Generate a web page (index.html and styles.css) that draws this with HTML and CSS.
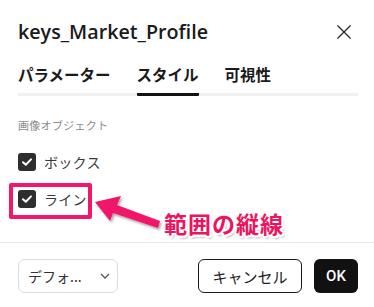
FILE: index.html
```html
<!DOCTYPE html>
<html lang="ja">
<head>
<meta charset="utf-8">
<link rel="stylesheet" href="styles.css">
</head>
<body>
<div class="dialog">
  <div class="header">
    <div class="title">keys_Market_Profile</div>
    <svg class="close" width="16" height="16" viewBox="0 0 16 16"><path d="M1.5 1.5L14.5 14.5M14.5 1.5L1.5 14.5" stroke="#2a2a2a" stroke-width="1.4" fill="none"/></svg>
  </div>
  <div class="tabs">
    <div class="tab">パラメーター</div>
    <div class="tab active">スタイル</div>
    <div class="tab">可視性</div>
  </div>
  <div class="content">
    <div class="section">画像オブジェクト</div>
    <div class="row">
      <span class="cb"><svg width="18" height="18" viewBox="0 0 18 18"><path d="M5 9.2L7.8 11.8L13 6.4" stroke="#fff" stroke-width="2" fill="none" stroke-linecap="round" stroke-linejoin="round"/></svg></span>
      <span class="label">ボックス</span>
    </div>
    <div class="row">
      <span class="cb"><svg width="18" height="18" viewBox="0 0 18 18"><path d="M5 9.2L7.8 11.8L13 6.4" stroke="#fff" stroke-width="2" fill="none" stroke-linecap="round" stroke-linejoin="round"/></svg></span>
      <span class="label">ライン</span>
    </div>
  </div>
  <div class="footer">
    <div class="select"><span>デフォ...</span><svg width="10" height="6" viewBox="0 0 10 6"><path d="M1 1L5 5L9 1" stroke="#555" stroke-width="1.3" fill="none"/></svg></div>
    <div class="spacer"></div>
    <div class="btn cancel">キャンセル</div>
    <div class="btn ok">OK</div>
  </div>
</div>
<div class="hl"></div>
<svg class="arrow" width="374" height="307" viewBox="0 0 374 307">
  <defs>
    <filter id="sh" x="-20%" y="-20%" width="140%" height="160%">
      <feDropShadow dx="1.5" dy="2" stdDeviation="1.2" flood-color="#000" flood-opacity="0.35"/>
    </filter>
  </defs>
  <polygon points="95,202 121,196 117,205 160,221 158,228 113,213 110,221" fill="#f2176a" filter="url(#sh)"/>
</svg>
<div class="note">範囲の縦線</div>
</body>
</html>
```
FILE: styles.css
```css
* { box-sizing: border-box; }
html, body { margin: 0; padding: 0; }
body {
  width: 374px;
  height: 307px;
  background: #fff;
  font-family: "Noto Sans CJK JP", "Noto Sans", sans-serif;
  color: #131722;
  position: relative;
  overflow: hidden;
}
.dialog { width: 374px; height: 307px; display: flex; flex-direction: column; }
.header {
  display: flex;
  align-items: center;
  justify-content: space-between;
  padding: 19px 22px 0 18px;
  height: 44px;
}
.title {
  font-family: "Open Sans", "Noto Sans", sans-serif;
  font-weight: 600;
  font-size: 19.7px;
  line-height: 25px;
  color: #1a1a1a;
}
.close { display: block; }
.tabs {
  display: flex;
  margin: 19px 16px 0 18px;
  border-bottom: 3px solid #f0f0f0;
  gap: 26px;
}
.tab {
  font-size: 15.5px;
  font-weight: 700;
  line-height: 22px;
  padding-bottom: 8px;
  border-bottom: 3px solid transparent;
  margin-bottom: -3px;
  color: #1a1a1a;
}
.tab.active { border-bottom-color: #131313; border-radius: 1px; }
.content { padding: 21px 18px 0; flex: 1; }
.section {
  font-size: 11px;
  line-height: 16px;
  color: #8a8a8a;
  margin-bottom: 20px;
  letter-spacing: 0.3px;
}
.row {
  display: flex;
  align-items: center;
  height: 18px;
  margin-bottom: 19px;
}
.cb {
  width: 18px; height: 18px;
  background: #2e2e2e;
  border-radius: 3px;
  display: block;
}
.cb svg { display: block; }
.label { margin-left: 8px; font-size: 14px; color: #3a3a3a; line-height: 18px; letter-spacing: 0.3px; }
.footer {
  border-top: 1px solid #e6e6e6;
  height: 65px;
  padding: 16px 16px 0 18px;
  display: flex;
  align-items: flex-start;
}
.select {
  width: 100px; height: 34px;
  border: 1px solid #dcdcdc;
  border-radius: 6px;
  display: flex; align-items: center; justify-content: space-between;
  padding: 0 7px 0 9px;
  font-size: 14px; color: #333;
}
.spacer { flex: 1; }
.btn {
  height: 34px;
  border-radius: 6px;
  display: flex; align-items: center; justify-content: center;
  font-size: 15px;
}
.cancel { width: 104px; border: 1px solid #1a1a1a; color: #222; margin-right: 12px; }
.ok {
  width: 44px; background: #111; color: #fff;
  font-family: "Roboto", "Liberation Sans", sans-serif; font-weight: 500; font-size: 15px;
}
.hl {
  position: absolute;
  left: 9px; top: 183px;
  width: 83px; height: 36px;
  border: 4px solid #f2176a;
  border-radius: 2px;
}
.arrow { position: absolute; left: 0; top: 0; pointer-events: none; }
.note {
  position: absolute;
  left: 164px; top: 208px;
  font-size: 23px;
  font-weight: 700;
  line-height: 30px;
  letter-spacing: 1px;
  color: #ea1560;
  text-shadow: -2px 0 #fff, 2px 0 #fff, 0 -2px #fff, 0 2px #fff, -1.5px -1.5px #fff, 1.5px 1.5px #fff, -1.5px 1.5px #fff, 1.5px -1.5px #fff, 2px 3px 2px rgba(0,0,0,0.3);
}
```
